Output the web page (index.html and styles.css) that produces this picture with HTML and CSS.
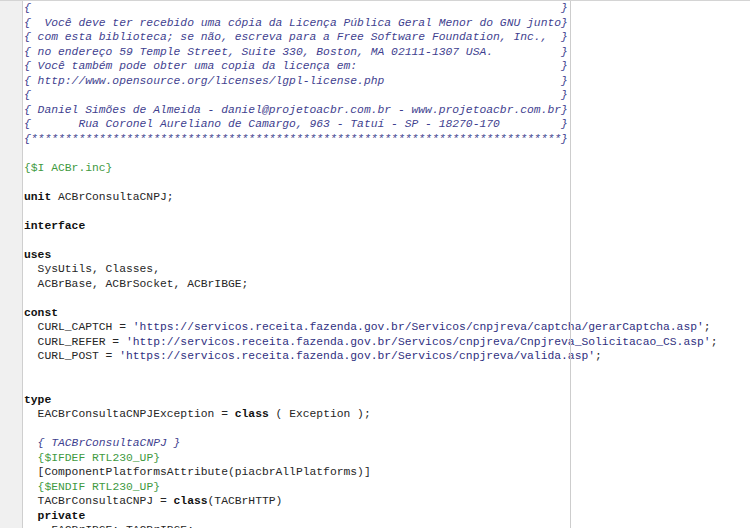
FILE: index.html
```html
<!DOCTYPE html>
<html lang="pt">
<head>
<meta charset="utf-8">
<title>ACBrConsultaCNPJ.pas</title>
<link rel="stylesheet" href="styles.css">
</head>
<body>
<div class="editor">
  <div class="gutter"></div>
  <div class="code">
    <div class="margin-line"></div>
<pre class="src"><span class="c">{                                                                              }</span>
<span class="c">{  Você deve ter recebido uma cópia da Licença Pública Geral Menor do GNU junto}</span>
<span class="c">{ com esta biblioteca; se não, escreva para a Free Software Foundation, Inc.,  }</span>
<span class="c">{ no endereço 59 Temple Street, Suite 330, Boston, MA 02111-1307 USA.          }</span>
<span class="c">{ Você também pode obter uma copia da licença em:                              }</span>
<span class="c">{ http://www.opensource.org/licenses/lgpl-license.php                          }</span>
<span class="c">{                                                                              }</span>
<span class="c">{ Daniel Simões de Almeida - daniel@projetoacbr.com.br - www.projetoacbr.com.br}</span>
<span class="c">{       Rua Coronel Aureliano de Camargo, 963 - Tatuí - SP - 18270-170         }</span>
<span class="c">{******************************************************************************}</span>

<span class="d">{$I ACBr.inc}</span>

<span class="k">unit</span> ACBrConsultaCNPJ;

<span class="k">interface</span>

<span class="k">uses</span>
  SysUtils, Classes,
  ACBrBase, ACBrSocket, ACBrIBGE;

<span class="k">const</span>
  CURL_CAPTCH = <span class="s">'https://servicos.receita.fazenda.gov.br/Servicos/cnpjreva/captcha/gerarCaptcha.asp'</span>;
  CURL_REFER = <span class="s">'http://servicos.receita.fazenda.gov.br/Servicos/cnpjreva/Cnpjreva_Solicitacao_CS.asp'</span>;
  CURL_POST = <span class="s">'https://servicos.receita.fazenda.gov.br/Servicos/cnpjreva/valida.asp'</span>;


<span class="k">type</span>
  EACBrConsultaCNPJException = <span class="k">class</span> ( Exception );

  <span class="c">{ TACBrConsultaCNPJ }</span>
  <span class="d">{$IFDEF RTL230_UP}</span>
  [ComponentPlatformsAttribute(piacbrAllPlatforms)]
  <span class="d">{$ENDIF RTL230_UP}</span>
  TACBrConsultaCNPJ = <span class="k">class</span>(TACBrHTTP)
  <span class="k">private</span>
    FACBrIBGE: TACBrIBGE;
</pre>
  </div>
</div>
</body>
</html>
```

FILE: styles.css
```css
html, body {
  margin: 0;
  padding: 0;
  background: #ffffff;
  overflow: hidden;
}

.editor {
  display: flex;
  height: 527px;
  border-top: 1px solid #d4d4d4;
  background: #ffffff;
}

.gutter {
  width: 22px;
  flex: 0 0 22px;
  background: #f0f0f0;
  border-right: 1px solid #cfcfcf;
}

.code {
  position: relative;
  flex: 1;
  overflow: hidden;
}

.margin-line {
  position: absolute;
  top: 0;
  bottom: 0;
  left: 547px;
  width: 1px;
  background: #cdcdcd;
}

.src {
  margin: 0;
  padding: 0 0 0 1px;
  font-family: "Liberation Mono", "Courier New", monospace;
  font-size: 11.33px;
  line-height: 14.5px;
  color: #262626;
  white-space: pre;
}

.c {
  color: #3f3f8f;
  font-style: italic;
}

.s {
  color: #30307f;
}

.d {
  color: #3f9a3f;
}

.k {
  color: #111111;
  font-weight: bold;
}
```
